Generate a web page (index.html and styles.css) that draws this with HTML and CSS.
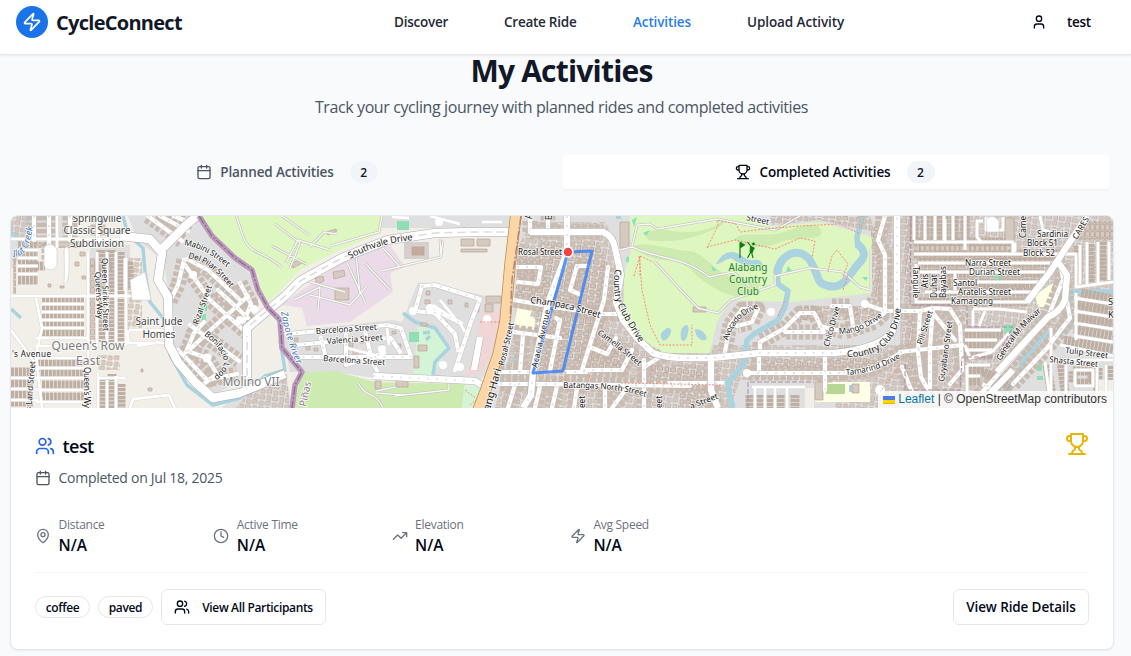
FILE: index.html
```html
<!DOCTYPE html>
<html lang="en">
<head>
<meta charset="utf-8">
<title>CycleConnect</title>
<link rel="stylesheet" href="styles.css">
</head>
<body>
<svg class="sprite" aria-hidden="true">
  <symbol id="i-zap" viewBox="0 0 24 24"><path d="M4 14a1 1 0 0 1-.78-1.63l9.9-10.2a.5.5 0 0 1 .86.46l-1.92 6.02A1 1 0 0 0 13 10h7a1 1 0 0 1 .78 1.63l-9.9 10.2a.5.5 0 0 1-.86-.46l1.92-6.02A1 1 0 0 0 11 14z"/></symbol>
  <symbol id="i-user" viewBox="0 0 24 24"><path d="M19 21v-2a4 4 0 0 0-4-4H9a4 4 0 0 0-4 4v2"/><circle cx="12" cy="7" r="4"/></symbol>
  <symbol id="i-users" viewBox="0 0 24 24"><path d="M16 21v-2a4 4 0 0 0-4-4H6a4 4 0 0 0-4 4v2"/><circle cx="9" cy="7" r="4"/><path d="M22 21v-2a4 4 0 0 0-3-3.87M16 3.13a4 4 0 0 1 0 7.75"/></symbol>
  <symbol id="i-calendar" viewBox="0 0 24 24"><path d="M8 2v4M16 2v4"/><rect width="18" height="18" x="3" y="4" rx="2"/><path d="M3 10h18"/></symbol>
  <symbol id="i-trophy" viewBox="0 0 24 24"><path d="M6 9H4.5a2.500 2.500 0 0 1 0-5H6M18 9h1.500a2.500 2.500 0 0 0 0-5H18M4 22h16M10 14.660V17c0 .55-.47.98-.97 1.210C7.850 18.750 7 20.240 7 22M14 14.660V17c0 .55.47.98.97 1.210C16.150 18.750 17 20.240 17 22M18 2H6v7a6 6 0 0 0 12 0V2Z"/></symbol>
  <symbol id="i-pin" viewBox="0 0 24 24"><path d="M20 10c0 4.993-5.539 10.193-7.399 11.799a1 1 0 0 1-1.202 0C9.539 20.193 4 14.993 4 10a8 8 0 0 1 16 0"/><circle cx="12" cy="10" r="3"/></symbol>
  <symbol id="i-clock" viewBox="0 0 24 24"><circle cx="12" cy="12" r="10"/><path d="M12 6v6l4 2"/></symbol>
  <symbol id="i-trend" viewBox="0 0 24 24"><path d="M22 7l-8.500 8.500-5-5L2 17M16 7h6v6"/></symbol>
</svg>

<header class="header">
  <a class="brand"><span class="brand-mark"><svg class="icon s20"><use href="#i-zap"/></svg></span><span class="brand-name">CycleConnect</span></a>
  <nav class="nav">
    <a class="nav-discover">Discover</a><a class="nav-create">Create Ride</a><a class="nav-activities active">Activities</a><a class="nav-upload">Upload Activity</a>
  </nav>
  <div class="account"><svg class="icon s16"><use href="#i-user"/></svg><span>test</span></div>
</header>

<main class="page">
  <h1 class="title">My Activities</h1>
  <p class="subtitle">Track your cycling journey with planned rides and completed activities</p>

  <div class="tabs">
    <div class="tab"><svg class="icon s16"><use href="#i-calendar"/></svg><span class="tab-planned">Planned Activities</span><span class="count">2</span></div>
    <div class="tab tab-active"><svg class="icon s16"><use href="#i-trophy"/></svg><span class="tab-completed">Completed Activities</span><span class="count">2</span></div>
  </div>

  <article class="card">
    <div class="map">
<svg class="map-canvas" viewBox="11 216 1102 192" preserveAspectRatio="none">
  <defs>
    <pattern id="houses" width="13" height="12" patternUnits="userSpaceOnUse" patternTransform="rotate(8)">
      <path class="house" d="M1 1h4v4h-4zM7 .5h4.500v3.500h-4.500zM.5 7h5v3.500h-5zM8 6.500h3.500v4.500h-3.500z"/>
    </pattern>
    <pattern id="rows" width="5" height="7" patternUnits="userSpaceOnUse"><path class="house" d="M.3 .6h4.200v5.500h-4.200z"/></pattern>

    <g id="dense">
      <path d="M28 266H112M42 300H84M42 308H84M42 316H84M42 324H84M42 332H84M37 363H84M37 373H84M11 372H33M11 383H33M11 394H33M42 385H84M42 397H84M11 402H33M18 246H38M18 254H38M18 262H38M18 270H38M18 280H38"/>
      <path d="M101 250V342M111 250V342M120 252V342M129 262V290M103 378V408M112 374V408M121 384V408"/>
      <path d="M914 216V241M925 216V241M935 216V241M944 216V241M954 216V241M965 216V241"/>
      <path d="M914 242H1013M914 254H1062M920 263H1050M920 273H1045M940 283H1040M930 292H1035M915 302H1027"/>
      <path d="M1078 246V284M1090 244V282M1102 242V281M1081 293L1113 299M1074 304L1113 311M1074 317L1113 323M1074 329L1113 336M1064 340L1113 349"/>
      <path d="M965 335H1003M965 345H997M963 355H992M969 370H985M969 381H980M984 372L1012 388"/>
      <path d="M1047 365L1052 396M1061 361L1066 400M1073 371H1092V383H1073ZM1098 368V402M1109 366V402"/>
      <path d="M750 395V408M760 395V408M770 395V408M780 395V408M795 395V408"/>
    </g>
    <g id="homes">
      <path d="M530 232H603M530 221V232M548 216V232M517 267L541 267L538 284L518 282M514 300L560 308L600 314L620 314M514 332L560 338M523 335L520 372M560 321L556 318M560 320L550 371M577 266L570 290L579 294M577 266H588M608 267L604 300L582 370H622L632 350M592 348L607 354L616 338M500 372H533M565 372H588M500 384H545L690 386M515 385L508 408M540 386L535 408M557 386L552 408M577 388L574 408M605 386V408M627 388L612 408M644 360V408"/>
      <path d="M663 355L644 367M711 356V395L718 408M670 383H722M760 353V342L785 328L800 313H814L824 332H785M759 352V373M748 373H845M825 352V390M730 324L725 352M730 325L742 309L758 309L752 322L737 326M832 306H850L853 326M865 304L885 311M820 326L845 332L875 322L885 312M843 373L870 370L892 358L902 352"/>
      <path d="M885 216L878 240L885 255V311L920 311L933 308L950 309L960 325L962 370L950 384M920 311L918 352L921 377L927 388M933 308L930 347V390M900 352L962 345M933 313L955 340M902 367L912 392"/>
      <path d="M1013 384L1047 348L1070 318L1060 262M975 400L1023 347L1048 317L1062 282M984 385L1004 397"/>
      <path d="M185 265L210 300L248 334M184 260L178 285L170 301M187 259L208 270L240 300M218 290L248 318M240 283L251 304L244 321M188 351L215 326L248 296M190 325L239 361M186 352L194 333L204 322M190 352L207 358L217 374L201 386M178 350L190 362L207 380L237 374"/>
      <path d="M148 216L182 241M160 216L188 231M174 216L193 224M34 216V240M49 216V260M70 216V240M98 218V240"/>
    </g>
    <g id="barcelona">
      <path d="M287 334L387 325L401 328L411 357H296M295 345L340 341L391 338L400 352M321 338L326 358M346 335V365L384 353M365 331L372 360L377 371M422 286L415 311L435 313L455 334L458 350M422 286L435 285L480 299L471 322L455 370M433 309L461 323"/>
    </g>
    <g id="r4">
      <path d="M11 239H134M11 296H148M88 253V408M36 298L42 328L36 355L42 408M57 216V248M97 252V346M107 252V346M116 252V346M125 258V290M11 330L36 364M126 258V346"/>
      <path d="M42 304H84M42 312H84M42 320H84M42 328H84M36 338H88M36 346H84M36 358H84M36 368H84M36 378H84M36 390H84M36 402H84M11 378H38M11 389H38M11 400H38M18 250H38M18 258H38M18 266H38M18 274H38"/>
      <path d="M98 373V408M107 380V408M116 376V408M98 378H125M129 330H168M128 330V343H165M137 346L160 342M130 408L133 399L169 395L175 408"/>
      <path d="M914 216V240M925 216V240M935 216V240M944 216V240M953 216V240M965 216V250M914 242H1013V254M1015 243V252M914 254H1065L1076 254V287L1113 282M918 263H1050M920 272H1045M953 282H1040M925 292H1035M915 302H1028M916 264V302M942 270V290M955 273V290"/>
      <path d="M1080 245V284M1087 242V284M1098 242V284M1109 242V280M1040 216L1043 230L1060 235M1074 298L1113 304M1076 293V340M1074 311L1113 317M1074 323L1113 329M1074 336L1113 342M1060 345L1113 356M973 309H998L1027 312M973 310V326M985 311L979 326"/>
      <path d="M965 330H1001M965 340H997M965 350H992M992 352L1009 333M965 345L970 358L992 352M967 365H990M967 365V398M967 376H980M1045 362L1050 400M1051 328V400M1058 360H1113M1075 370H1093V386H1075ZM1066 365V402M1097 365V402M1106 365V402"/>
      <path d="M752 387H805M755 388V408M765 388V408M775 388V408M787 388V408M945 219V242M983 221H977V237L982 243M986 217V230H1003V217"/>
      <path d="M433 305L460 323L465 332M387 328L389 345M347 348L374 355M440 300L455 318M392 217L409 218M430 216L460 224M482 222L502 222"/>
    </g>
    <g id="trails">
      <path d="M236 216C243 232 242 244 255 251S275 260 282 268M275 224L300 243L290 268M282 216L309 235M286 263L298 240L330 250M310 247L324 232L337 234M272 246L306 264M382 216L379 232L330 246"/>
      <path d="M294 300L320 287L318 310M310 295L350 305L367 286M345 258L365 302M356 254L360 294M383 248L400 267M365 263L390 290M300 279L345 292M440 239L441 257L381 271M441 256L443 240"/>
      <path d="M358 383C368 400 375 390 383 408M376 393L404 395M396 387L376 391M449 381V390L395 396"/>
      <path d="M620 250L632 247L637 225L650 224L657 229L717 219L775 230L800 216M632 247C660 260 683 256 709 277L733 272L750 287M654 261L678 287L698 308L718 313L731 300L775 285V276L810 268L843 272L860 287L871 290V250"/>
    </g>
  </defs>

  <rect class="land" x="11" y="216" width="1102" height="192"/>
  <path class="block" d="M11 216H70V245H30L11 270ZM128 216H205L262 290L247 328V378L213 395L170 350V300L163 260L137 240Z"/>
  <path class="block" d="M383 216H512L510 228H381ZM282 332L392 320 402 322 418 282 482 295 505 302 488 372 475 385 375 378 335 372 290 372Z"/>
  <path class="block" d="M517 216H1113V408H480L505 330Z"/>
  <path class="block" d="M90 245H130V290H90ZM250 380L285 372 292 408H222Z"/>
  <path class="texture soft" d="M530 222H606L630 290 655 345H900V300H875V216H1113V330H1064L1040 350 1000 408H835V380H740L730 408H495L515 330 517 250Z"/>
  <path class="texture soft" d="M11 216H27V238H11ZM128 258H142V330H128ZM258 382L287 374 290 408H236ZM98 355H120V370H98Z"/>
  <path class="golf" d="M200 216H382L381 233L340 250 300 270 265 306 258 275 240 258 218 240Z"/>
  <path class="retail" d="M350 256L375 246H391L405 267 390 273 393 292 350 322 307 326 302 308 282 305 295 295Z"/>
  <path class="meadow" d="M302 372L335 371 375 382 465 384 462 408H293Z"/>
  <path class="grove" d="M418 327L432 327 448 348 433 375H413ZM464 386H486L480 408H463ZM500 382H560V386H500ZM621 381H725V386H621Z"/>
  <path class="civic" d="M482 310H506L498 338 482 372 465 378 475 348Z"/>
  <path class="school" d="M517 308L532 311 530 316 540 322 535 330 514 326ZM815 382H870V402H815ZM1035 295L1053 283 1050 307H1038Z"/>
  <path class="sport" d="M409 332H419V342H409ZM397 221H409V230H397ZM995 274H1001L1003 288 995 284ZM1037 364H1042V371H1037ZM1037 376H1043V380H1037ZM1004 325H1015L1012 333H1004ZM957 348H963V357H957ZM201 303H207V311H201ZM201 314H206V321H201Z"/>

  <path class="golf" d="M630 216H746L770 226 820 222 873 237 872 293 793 302 730 300 717 322 710 353H663L640 338 623 315 624 275 631 250Z"/>
  <path class="fairway" d="M646 232C665 226 680 236 703 230S718 218 724 221 694 240 670 241 646 240 646 232ZM633 246C650 241 670 250 688 251S712 272 735 278 765 276 757 290 725 295 709 285 690 263 670 261 640 254 633 246ZM734 239C745 229 765 240 790 230S823 227 821 234 792 236 778 243 741 247 734 239Z"/>
  <path class="tree" d="M632 220L637 217 634 227ZM643 233L650 230 646 236ZM629 257A2 3 0 1 0 629 262ZM711 265L717 271 713 271ZM788 266L792 271 786 272ZM862 277H868L866 281Z"/>
  <path class="water-fill" d="M716 264C727 245 738 253 745 258S758 256 762 263 739 265 734 260 721 265 716 264ZM661 334C667 324 674 328 670 335S660 343 661 334ZM682 328C689 320 690 329 687 337S678 341 682 328ZM695 329C703 328 710 339 705 340S695 336 695 329Z"/>
  <path class="river wide" d="M777 274C779 253 801 245 811 262S815 283 829 286 849 276 855 268 870 256 858 244"/>
  <path class="river" d="M858 248L857 237 863 216M777 270L778 284 788 291 785 307 778 320 754 334 747 340 743 365 728 382 729 393 733 408"/>
  <path class="river thin" d="M123 216L128 235 143 248 145 272 150 302 163 318 168 330 170 355 187 385 213 405 240 398 265 376 285 370 280 340M11 232L20 242 30 235 27 216M11 309L21 318"/>
  <path class="river thin" d="M403 313L415 322 435 328 449 348 435 362 433 375M423 333L430 332M426 340L430 336"/>
  <path class="river" d="M1113 292H1071L1067 330 1042 336 1025 358 1017 380 1000 395"/>
  <path class="pool" d="M616 216h5v3h-5zM512 358h5v4h-5zM849 385h7v7h-7z"/>

  <use href="#homes" class="home-row"/>
  <path class="texture" d="M540 242H598L610 270 604 330 570 372H532ZM588 320L640 350 625 372H582ZM520 243L560 258 545 300 515 296Z"/>
  <path class="texture" d="M650 365H705V380H650ZM680 388H712V408H680ZM800 306H875V320H800ZM905 315H913V372H905ZM765 358H870V368H765ZM905 216H910V300H905ZM871 224H880V300H871ZM770 216H870L875 232 820 220 772 225Z"/>
  <use href="#dense" class="dense-row"/>
  <path class="dense-fill" d="M917 245H1008V251H917ZM917 257H1050V261H917ZM1078 221H1113V240H1078ZM90 258H95V340H90ZM38 242H84V248H38ZM13 250H16V296H13ZM1025 255H1060V261H1025Z"/>
  <path class="open" d="M57 248H86V291H45V265ZM125 360H165L185 390 170 393 128 398ZM92 345H125V350H92ZM805 388H814V408H805ZM1096 380H1113V408H1102Z"/>
  <path class="house" d="M335 288h14v12h-14zM333 272l11-2 1 6-11 3zM315 278l8-2 1 5-7 3zM461 239h13v7h-13zM477 239h13v7h-13zM461 249h26v3h-26zM418 345h9v6h-9zM414 356h5v12h-5zM620 222h9v26h-9zM396 380h12v7h-12zM375 381h6v8h-6zM693 307h13v5h-13zM486 296h15v7h-15zM485 304h8v8h-8zM50 242h30v5h-30zM141 369h2v3h-2zM148 388h4v3h-4zM1005 218h9v24h-9zM852 384h7v9h-7zM815 382h8v18h-8zM1007 280h8v5h-8zM80 252h5v4h-5zM75 262h4v4h-4zM82 276h4v3h-4zM48 284h3v3h-3zM60 286h4v2h-4zM326 232l10-3 1 2-9 4zM291 263l9-3 2 3-9 5z"/>
  <path class="house" d="M294 338h4v3h-4zM306 346h4v4h-4zM314 348h4v3h-4zM349 343h4v4h-4zM353 351h5v5h-5zM360 340h4v3h-4zM397 344h4v3h-4zM355 358h4v4h-4zM380 345h4v3h-4zM392 331h4v3h-4zM426 291h4v4h-4zM425 300h5v4h-5zM448 300h4v4h-4zM465 303h3v4h-3zM443 321h4v3h-4zM421 323h6v3h-6zM475 307h4v5h-4z"/>
  <path class="parking" d="M404 242H429V259H404Z"/><path class="house dark" d="M412 247h12v8h-12z"/>
  <path class="sport" d="M995 275H999V282H995Z"/><path class="pitch" d="M826 384H845V394H826Z"/>

  <use href="#trails" class="trail-case"/><use href="#trails" class="trail"/>
  <use href="#r4" class="r4-case"/><use href="#homes" class="r5-case"/><use href="#barcelona" class="r5-case"/>
  <use href="#r4" class="r4"/><use href="#homes" class="r5"/><use href="#barcelona" class="r5"/>
  <use href="#homes" class="speckle"/><use href="#barcelona" class="speckle"/>
  <path class="pale-fill" d="M44 248C46 242 57 244 57 251V264C56 272 44 271 44 264ZM65 248Q68 244 69 252V268Q69 282 64 285Q65 267 64 250ZM130 280L145 272 151 300H132ZM986 219Q993 213 999 221V232H987Z"/>
  <g class="cul">
    <circle cx="193" cy="275" r="4"/><circle cx="207" cy="358" r="4.500"/><circle cx="240" cy="320" r="4"/><circle cx="254" cy="309" r="4"/><circle cx="413" cy="311" r="4"/><circle cx="430" cy="308" r="4"/><circle cx="443" cy="365" r="4"/><circle cx="460" cy="367" r="4"/><circle cx="487" cy="319" r="4"/><circle cx="382" cy="349" r="4"/><circle cx="439" cy="222" r="4"/><circle cx="771" cy="312" r="4"/><circle cx="747" cy="373" r="4"/><circle cx="865" cy="304" r="4"/><circle cx="880" cy="390" r="5"/>
  </g>
  <path class="r8-case" d="M120 236L150 239 162 253 158 280 168 297 169 345 178 362 195 382 213 398 240 393 285 374M163 248L185 226 197 216M247 378V328L285 296 300 281 342 258 388 240 435 233 475 232H512"/>
  <path class="r8" d="M120 236L150 239 162 253 158 280 168 297 169 345 178 362 195 382 213 398 240 393 285 374M163 248L185 226 197 216M247 378V328L285 296 300 281 342 258 388 240 435 233 475 232H512"/>
  <path class="lane" d="M250 325L285 296 300 281 342 258 388 240 435 233 475 232H512M247 376V336"/>
  <path class="r7-case" d="M567 216V252L548 303 533 372 531 395 523 408M530 232H603Q613 236 615 248L621 275 616 302 623 320 637 338 653 353Q665 358 690 358H711L760 353H835Q875 349 892 333L897 318V216M373 376L475 381 485 387M480 337L474 370M711 358V390L718 408M1087 216L1050 272 1027 302M997 372L1048 317Q1060 312 1065 300L1067 275 1058 262M976 408L1013 370"/>
  <path class="r7" d="M567 216V252L548 303 533 372 531 395 523 408M530 232H603Q613 236 615 248L621 275 616 302 623 320 637 338 653 353Q665 358 690 358H711L760 353H835Q875 349 892 333L897 318V216M373 376L475 381 485 387M480 337L474 370M711 358V390L718 408M1087 216L1050 272 1027 302M997 372L1048 317Q1060 312 1065 300L1067 275 1058 262M976 408L1013 370"/>
  <path class="speckle" d="M567 216V252L548 303 533 372 531 395 523 408M621 275L616 302 623 320 637 338 653 353Q665 358 690 358H711L760 353H835Q875 349 892 333L897 318V216M373 376L475 381 485 387"/>
  <path class="boundary" d="M199 216L212 236 235 258 252 270 258 290 268 308 280 320 282 348 302 372 295 385 292 408"/>
  <path class="boundary-core" d="M199 216L212 236 235 258 252 270 258 290 268 308 280 320 282 348 302 372 295 385 292 408"/>
  <path class="suburb" d="M911 216L910 305H967V327H1013L997 357H962L960 390H905V363M748 408V382H814"/>
  <path class="footpath" d="M640 256V276M639 256L642 290 650 325 660 345H692V325M634 276L640 256 653 262M707 248L718 226 717 220 736 224 740 232 765 229 800 226 840 224 860 234M707 247L735 240 775 249 800 238 815 241 812 258M828 271L832 256 837 250 848 264 843 276M843 290L848 275M588 372L591 382M565 372V383M621 383L724 385M480 322H500M778 316L785 300M880 392L902 362M465 390L485 405M470 405L482 395"/>
  <path class="trunk-case" d="M516 214L510 265 505 322 498 355 485 392 478 410"/>
  <path class="trunk" d="M516 214L510 265 505 322 498 355 485 392 478 410"/>
  <path class="rail" d="M521 216L512 280 510 322"/>

  <path class="route" d="M568 252L592 251 563 371 533 373 568 252"/>
  <circle class="marker" cx="568" cy="252" r="5"/>
  <path class="golf-icon" d="M740 258V242.500M747.500 242L751 246.500L754 248.500L750.500 252.500L747.500 258M751.500 252L753 258"/>
  <path class="golf-head" d="M740 241.500L745.500 245 740 248.500ZM750 246l4.500 1.500-2 5.500-3-1z"/>
  <circle class="golf-head" cx="753.500" cy="244" r="1.400"/>

  <defs>
    <path id="t-south" d="M350 259Q378 243 414 240"/>
    <path id="t-mabini" d="M184 245Q208 249 230 270"/>
    <path id="t-pilar" d="M188 258Q212 262 233 292"/>
    <path id="t-boni" d="M204 335C214 343 223 352 224 362Q224 370 211 379"/>
    <path id="t-zapote" d="M281 312Q286 340 299 370"/>
    <path id="t-country" d="M615 269Q611 294 621 312T642 347"/>
    <path id="t-camella" d="M597 334Q618 348 642 369"/>
    <path id="t-champ" d="M530 303Q568 307 602 319"/>
    <path id="t-batangas" d="M563 388Q620 387 648 398"/>
    <path id="t-avocado" d="M728 341Q735 315 760 308"/>
    <path id="t-mango" d="M839 334Q862 334 886 314"/>
    <path id="t-club" d="M847 357Q897 358 901 307"/>
    <path id="t-tamarind" d="M846 375Q878 373 903 356"/>
    <path id="t-malvar" d="M1001 361Q1018 329 1045 309"/>
    <path id="t-creek" d="M13 257Q31 257 33 222"/>
  </defs>
  <g class="label street">
    <text><textPath href="#t-south" textLength="66">Southvale Drive</textPath></text>
    <text class="small"><textPath href="#t-mabini" textLength="49">Mabini Street</textPath></text>
    <text class="small"><textPath href="#t-pilar" textLength="53">Del Pilar Street</textPath></text>
    <text class="small"><textPath href="#t-boni" textLength="53">Bonifacio Loop</textPath></text>
    <text class="small" transform="translate(198 325) rotate(-70)" textLength="41">Rizal Street</text>
    <text class="small" transform="translate(102 258) rotate(89)" textLength="73">Queen Sirikit Street</text>
    <text class="small" transform="translate(95 272) rotate(87)" textLength="47">Queens Way</text>
    <text class="small" transform="translate(84 367) rotate(90)" textLength="41">Queen's Wy</text>
    <text class="small" transform="translate(31 411) rotate(-85)" textLength="50">s Land Street</text>
    <text class="small" x="12" y="357" textLength="39">'s Avenue</text>
    <text class="small" transform="translate(316 334) rotate(-4)" textLength="61">Barcelona Street</text>
    <text class="small" transform="translate(327 344) rotate(-4)" textLength="56">Valencia Street</text>
    <text class="small" transform="translate(323 361) rotate(4)" textLength="62">Barcelona Street</text>
    <text class="small" x="518" y="255" textLength="44">Rosal Street</text>
    <text class="small" transform="translate(504 366) rotate(-77)" textLength="44">Rosal Street</text>
    <text class="main" transform="translate(490 411) rotate(-75)" textLength="43">ang Hari</text>
    <text><textPath href="#t-champ" textLength="71">Champaca Street</textPath></text>
    <text class="small" transform="translate(537 368) rotate(-77)" textLength="59">Acacia Avenue</text>
    <text><textPath href="#t-country" textLength="80">Country Club Drive</textPath></text>
    <text class="small"><textPath href="#t-camella" textLength="53">Camella Street</textPath></text>
    <text class="small"><textPath href="#t-batangas" textLength="83">Batangas North Street</textPath></text>
    <text class="small" transform="translate(532 219) rotate(-90)">A</text><text class="small" transform="translate(552 220) rotate(-90)">B</text>
    <text class="small" transform="translate(585 408) rotate(-90)">eet</text><text class="small" transform="translate(662 408) rotate(-90)">eet</text>
    <text class="small" transform="translate(746 220) rotate(12)">Street</text>
    <text class="small" transform="translate(691 409) rotate(-21)">a Street</text>
    <text class="small"><textPath href="#t-avocado" textLength="47">Avocado Drive</textPath></text>
    <text class="small" transform="translate(829 347) rotate(-75)" textLength="41">Chico Drive</text>
    <text class="small"><textPath href="#t-mango" textLength="48">Mango Drive</textPath></text>
    <text><textPath href="#t-club" textLength="82">Country Club Drive</textPath></text>
    <text class="small"><textPath href="#t-tamarind" textLength="58">Tamarind Drive</textPath></text>
    <text class="small" transform="translate(922 345) rotate(-72)" textLength="35">Pili Street</text>
    <text class="small" transform="translate(944 382) rotate(-82)" textLength="61">Guyabano Street</text>
    <text class="small" transform="translate(913 266) rotate(90)" textLength="32">Tanguile</text>
    <text class="small" transform="translate(928 288) rotate(-90)">Atis</text><text class="small" transform="translate(937 298) rotate(-90)">Duhat</text><text class="small" transform="translate(946 298) rotate(-90)" textLength="32">Bayabas</text>
    <text class="small" x="965" y="266" textLength="46">Narra Street</text><text class="small" x="969" y="275" textLength="51">Durian Street</text><text class="small" x="953" y="286">Santol</text><text class="small" x="958" y="295" textLength="53">Aratelis Street</text><text class="small" x="951" y="304" textLength="42">Kamagong</text>
    <text class="small" x="1037" y="237" textLength="31">Sardinia</text><text class="small" x="1027" y="246" textLength="31">Block 51</text><text class="small" x="1023" y="256" textLength="32">Block 52</text>
    <text class="small" transform="translate(1026 238) rotate(-90)">Came</text>
    <text class="small" transform="translate(1077 240) rotate(-60)">CARES St</text>
    <text class="small"><textPath href="#t-malvar" textLength="64">General M. Malvar</textPath></text>
    <text class="small" transform="translate(1065 353) rotate(7)" textLength="43">Tulip Street</text><text class="small" transform="translate(1049 362) rotate(6)" textLength="49">Shasta Street</text>
    <text x="1108" y="305">S</text><text x="1108" y="318">K</text>
  </g>
  <g class="label area">
    <text x="97" y="222" textLength="49">Springville</text><text x="97" y="234" textLength="67">Classic Square</text><text x="97" y="247" textLength="54">Subdivision</text>
    <text x="159" y="325" textLength="47">Saint Jude</text><text x="159" y="338" textLength="33">Homes</text>
  </g>
  <g class="label suburb-name">
    <text x="88" y="350" textLength="73">Queen's Row</text><text x="88" y="365" textLength="24">East</text><text x="251" y="386" textLength="57">Molino VII</text>
  </g>
  <g class="label club"><text x="748" y="271" textLength="39">Alabang</text><text x="748" y="283" textLength="38">Country</text><text x="748" y="295" textLength="22">Club</text></g>
  <text class="label river-name"><textPath href="#t-zapote" textLength="55">Zapote River</textPath></text>
  <text class="label river-name"><textPath href="#t-creek" textLength="40">Ilat Creek</textPath></text>
  <text class="label region-name" transform="translate(306 407) rotate(-78)">Piñas</text>
</svg>
      <div class="attribution"><svg class="flag" viewBox="0 0 12 8"><path fill="#4C7BE1" d="M0 0h12v4H0z"/><path fill="#FFD500" d="M0 4h12v3H0z"/><path fill="#E0BC00" d="M0 7h12v1H0z"/></svg><a>Leaflet</a><span>| © OpenStreetMap contributors</span></div>
    </div>

    <div class="card-body">
      <div class="card-head">
        <h2 class="ride"><svg class="icon s20"><use href="#i-users"/></svg><span>test</span></h2>
        <svg class="icon s24 award"><use href="#i-trophy"/></svg>
      </div>
      <div class="date"><svg class="icon s16"><use href="#i-calendar"/></svg><span>Completed on Jul 18, 2025</span></div>
      <div class="stats">
        <div class="stat"><svg class="icon s16"><use href="#i-pin"/></svg><div><p class="stat-name">Distance</p><p class="stat-value">N/A</p></div></div>
        <div class="stat"><svg class="icon s16"><use href="#i-clock"/></svg><div><p class="stat-name">Active Time</p><p class="stat-value">N/A</p></div></div>
        <div class="stat"><svg class="icon s16"><use href="#i-trend"/></svg><div><p class="stat-name">Elevation</p><p class="stat-value">N/A</p></div></div>
        <div class="stat"><svg class="icon s16"><use href="#i-zap"/></svg><div><p class="stat-name">Avg Speed</p><p class="stat-value">N/A</p></div></div>
      </div>
      <div class="card-foot">
        <span class="chip">coffee</span><span class="chip">paved</span>
        <button class="btn btn-people"><svg class="icon s16"><use href="#i-users"/></svg><span>View All Participants</span></button>
        <button class="btn btn-details">View Ride Details</button>
      </div>
    </div>
  </article>
</main>
</body>
</html>
```
FILE: styles.css
```css
* { box-sizing: border-box; }
body { margin: 0; height: 656px; overflow: hidden; background: #f9fafc; color: #020817; font-family: "Open Sans", "Noto Sans", sans-serif; }
h1, h2, p { margin: 0; }
.sprite { position: absolute; width: 0; height: 0; }
.icon { display: block; flex: none; fill: none; stroke: currentColor; stroke-width: 2; stroke-linecap: round; stroke-linejoin: round; }
.s16 { width: 16px; height: 16px; }
.s20 { width: 20px; height: 20px; }
.s24 { width: 24px; height: 24px; }

.header { position: relative; z-index: 2; display: grid; grid-template-columns: 378px 1fr 98px; align-items: center; height: 55px; padding: 0 0 10px 16px; background: #fff; border-bottom: 1px solid #e5e7eb; box-shadow: 0 1px 2px rgba(0, 0, 0, .06); white-space: nowrap; }
.brand { display: flex; align-items: center; gap: 8px; }
.brand-mark { display: grid; place-items: center; width: 32px; height: 32px; border-radius: 50%; background: #1a73e8; color: #fff; }
.brand-name { font-size: 20px; font-weight: 700; letter-spacing: -.72px; color: #111827; }
.nav { display: flex; font-size: 13.5px; font-weight: 600; letter-spacing: -.25px; color: #1f2937; }
.nav-discover { width: 110px; }
.nav-create { width: 129px; }
.nav-activities { width: 114px; letter-spacing: -.12px; }
.nav-upload { letter-spacing: -.09px; }
.nav .active { color: #2a7de9; }
.account { display: flex; align-items: center; gap: 21px; margin-left: -2px; font-size: 13.5px; font-weight: 600; letter-spacing: -.3px; }
.account span { margin-left: -1px; }

.page { width: 1104px; margin: -2px 0 0 10px; }
.title { height: 36px; padding-right: 1px; line-height: 36px; text-align: center; font-size: 30px; font-weight: 700; letter-spacing: -.8px; color: #111827; }
.subtitle { height: 24px; margin-top: 6px; padding-right: 1px; line-height: 24px; text-align: center; font-size: 16px; letter-spacing: -.4px; color: #4b5563; }
.tabs { display: grid; grid-template-columns: 548px 548px; height: 34px; margin: 36px 0 26px 4px; font-size: 13.5px; font-weight: 600; letter-spacing: -.14px; }
.tab { display: flex; align-items: center; justify-content: center; padding-right: 2px; color: #4b5563; white-space: nowrap; border-radius: 4px; }
.tab-active { background: #fff; color: #020817; box-shadow: 0 1px 2px rgba(0, 0, 0, .05); }
.tab .icon { margin-right: 8px; }
.count { display: grid; place-items: center; width: 28px; height: 22px; margin-left: 16px; border-radius: 11px; background: #f1f5f9; color: #0f172a; font-size: 12px; letter-spacing: 0; }

.card { height: 435px; overflow: hidden; border: 1px solid #e2e8f0; border-radius: 8px; background: #fff; box-shadow: 0 1px 2px rgba(0, 0, 0, .06); }
.map { position: relative; height: 192px; overflow: hidden; }
.map-canvas { display: block; width: 1102px; height: 192px; }
.attribution { position: absolute; right: 0; bottom: 0; display: flex; align-items: center; gap: 3.400px; height: 17px; padding: 0 6px 0 5px; background: rgba(255, 255, 255, .8); font: 12px/17px "Liberation Sans", Arial, sans-serif; color: #333; white-space: nowrap; }
.attribution a { color: #0078a8; }
.flag { width: 12px; height: 8px; }

.card-body { padding: 24px; }
.card-head { display: flex; justify-content: space-between; height: 28px; }
.ride { display: flex; align-items: center; gap: 7.500px; height: 28px; font-size: 18px; font-weight: 600; letter-spacing: -.55px; }
.ride .icon { color: #2563eb; }
.award { color: #eab308; }
.date { display: flex; align-items: center; gap: 7.500px; height: 20px; margin-top: 8px; font-size: 14px; line-height: 18px; letter-spacing: -.27px; color: #4b5563; }
.stats { display: grid; grid-template-columns: repeat(4, 178.300px); height: 40px; margin-top: 29px; }
.stat { display: flex; align-items: center; gap: 7.500px; color: #6b7280; }
.stat .icon { margin-top: -2px; }
.stat-name { font-size: 12px; line-height: 16px; letter-spacing: -.27px; }
.stat-value { font-size: 15.500px; line-height: 24px; font-weight: 600; color: #020817; }
.card-foot { display: flex; align-items: center; gap: 8px; margin-top: 15px; padding-top: 16px; border-top: 1px solid #f3f4f6; }
.chip { display: grid; place-items: center; width: 55px; height: 22px; border: 1px solid #e2e8f0; border-radius: 11px; font-size: 12px; font-weight: 600; letter-spacing: -.35px; }
.btn { display: flex; align-items: center; justify-content: center; height: 36px; padding: 0; border: 1px solid #e2e8f0; border-radius: 6px; background: #fff; color: #020817; font: 600 13.500px "Open Sans", sans-serif; letter-spacing: -.12px; white-space: nowrap; }
.btn-people { width: 165px; gap: 12px; font-size: 12px; letter-spacing: -.35px; }
.btn-details { width: 136px; margin-left: auto; }

.map-canvas path, .map-canvas use { stroke-linejoin: round; }
.land { fill: #f2efe9; }
.block { fill: #dfdfdf; }
.golf { fill: #def6c0; }
.fairway { fill: #cdebb0; }
.meadow { fill: #cdebb0; }
.grove { fill: #d3f5d6; }
.retail { fill: #ebdbe8; }
.civic { fill: #f0d6d6; }
.school { fill: #ffffe5; }
.sport { fill: #8edfb5; }
.pitch { fill: #b5d897; }
.tree { fill: #88e0be; }
.pool, .water-fill { fill: #aad3df; }
.parking { fill: #d5d0ce; }
.open { fill: #f2efe9; }
.river { fill: none; stroke: #aad3df; stroke-width: 5.500; }
.river.wide { stroke-width: 8; }
.river.thin { stroke-width: 3.500; }
.house { fill: #d6c9bf; stroke: #b7a496; stroke-width: .7; }
.house.dark { fill: #c5ab9d; }
.texture { fill: url(#houses); }
.texture.soft { opacity: .85; }
.dense-fill { fill: url(#rows); }
.home-row { fill: none; stroke: #cabbb0; stroke-width: 15; stroke-dasharray: 4.500 2; }
.dense-row { fill: none; stroke: #bfafa3; stroke-width: 9; stroke-dasharray: 3.200 .7; }
.trail-case { fill: none; stroke: #bdbdb8; stroke-width: 2.600; }
.trail { fill: none; stroke: #f8f8f4; stroke-width: 1.400; }
.r4-case { fill: none; stroke: #cfcac6; stroke-width: 3.600; }
.r4 { fill: none; stroke: #fff; stroke-width: 2.900; }
.r5-case { fill: none; stroke: #c1bebb; stroke-width: 5.200; }
.r5 { fill: none; stroke: #fff; stroke-width: 4.200; stroke-linecap: round; }
.speckle { fill: none; stroke: #e4e4e4; stroke-width: 1.800; stroke-dasharray: 2 7; }
.pale-fill { fill: #fff; stroke: #ccc; stroke-width: .6; }
.cul { fill: #fff; }
.r8-case { fill: none; stroke: #aaa; stroke-width: 9.500; }
.r8 { fill: none; stroke: #fff; stroke-width: 8.400; }
.lane { fill: none; stroke: #ddd; stroke-width: 1.600; stroke-dasharray: 8 5; }
.r7-case { fill: none; stroke: #b5b5b5; stroke-width: 7.400; }
.r7 { fill: none; stroke: #fff; stroke-width: 6.400; }
.boundary { fill: none; stroke: #bb99bb; stroke-width: 5.500; }
.boundary-core { fill: none; stroke: #8e6c92; stroke-width: 1.300; stroke-dasharray: 9 2 2 2; }
.suburb { fill: none; stroke: #a88bab; stroke-width: 1; stroke-dasharray: 5 2; }
.footpath { fill: none; stroke: #fa8072; stroke-width: .9; stroke-dasharray: 2 1.500; }
.trunk-case { fill: none; stroke: #b98a55; stroke-width: 11.500; }
.trunk { fill: none; stroke: #fcd6a4; stroke-width: 10; }
.rail { fill: none; stroke: #b78573; stroke-width: 1.500; stroke-dasharray: 9 2 2 2; }
.route { fill: none; stroke: #3b82f6; stroke-opacity: .85; stroke-width: 3; stroke-linecap: round; }
.marker { fill: #ef4444; stroke: #fff; stroke-width: 1.500; }
.golf-icon { fill: none; stroke: #0a8010; stroke-width: 1.200; }
.golf-head { fill: #0a8010; }
.label { font-family: "Noto Sans", sans-serif; fill: #1a1a1a; stroke: #fff; stroke-width: 1.800px; stroke-opacity: .75; paint-order: stroke; stroke-linejoin: round; }
.street { font-size: 9.300px; }
.street .main { font-size: 10.500px; }
.small { font-size: 8.200px; }
.area { font-size: 10.200px; text-anchor: middle; fill: #444; }
.suburb-name { font-size: 12px; text-anchor: middle; fill: #7b7b7b; }
.club { font-size: 10px; text-anchor: middle; fill: #238135; stroke: #def6c0; }
.river-name { font-size: 9.300px; font-style: italic; fill: #4d80b3; }
.region-name { font-size: 10px; fill: #9b7ba0; }
```
